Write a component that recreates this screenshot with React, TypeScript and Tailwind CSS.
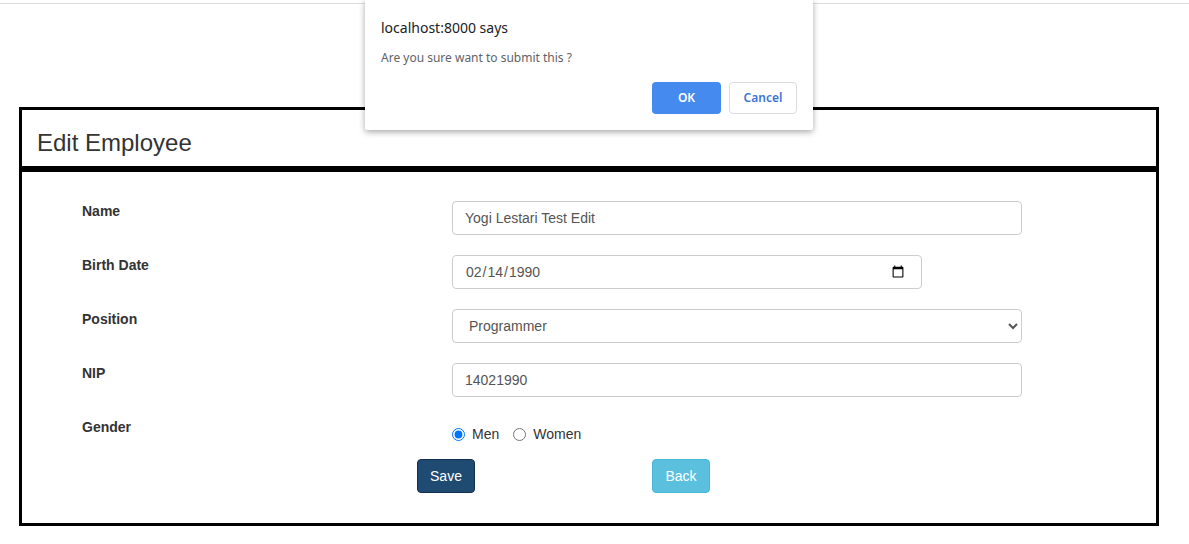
import { useState } from 'react';

const rowLabel = 'w-[370px] shrink-0 text-[14px] leading-5 font-bold text-[#333]';
const inputBase =
  'h-[34px] rounded-[4px] border border-[#ccc] bg-white px-3 text-[14px] text-[#555] outline-none';

function ConfirmDialog() {
  return (
    <div
      className="absolute left-[365px] top-0 w-[448px] h-[130px] bg-white rounded-b-[2px] shadow-[0_2px_6px_rgba(0,0,0,0.35)] px-4 pt-[18px]"
      style={{ fontFamily: '"Noto Sans", "Open Sans", sans-serif' }}
    >
      <div className="text-[14px] leading-5 text-[#202124]">localhost:8000 says</div>
      <div className="mt-[12px] text-[12px] leading-4 text-[#5f6368]">Are you sure want to submit this ?</div>
      <div className="mt-[16px] flex justify-end gap-2">
        <button className="w-[69px] h-[32px] rounded-[4px] bg-[#448aef] text-white text-[12px] font-semibold">
          OK
        </button>
        <button className="w-[68px] h-[32px] rounded-[4px] border border-[#dadce0] bg-white text-[#3b74d9] text-[12px] font-semibold">
          Cancel
        </button>
      </div>
    </div>
  );
}

export default function App() {
  const [name, setName] = useState('Yogi Lestari Test Edit');
  const [birth, setBirth] = useState('1990-02-14');
  const [position, setPosition] = useState('Programmer');
  const [nip, setNip] = useState('14021990');
  const [gender, setGender] = useState('men');

  return (
    <div
      className="relative w-[1189px] h-[544px] bg-white overflow-hidden"
      style={{ fontFamily: '"Liberation Sans", Arial, sans-serif' }}
    >
      <div className="h-[3px]" />
      <div className="border-t border-[#dcdcdc]" />

      <div className="ml-[19px] mt-[103px] w-[1140px] border-[3px] border-black">
        <div className="h-[62px] pl-[15px] pt-[19px] border-b-[6px] border-black">
          <h2 className="text-[24px] leading-7 text-[#333]">Edit Employee</h2>
        </div>

        <div className="pl-[60px] pt-[29px] pb-[30px]">
          <div className="flex items-start">
            <label className={rowLabel}>Name</label>
            <input
              className={`${inputBase} w-[570px] border-[#a8bfd6]`}
              value={name}
              onChange={(e) => setName(e.target.value)}
            />
          </div>

          <div className="flex items-start mt-[20px]">
            <label className={rowLabel}>Birth Date</label>
            <input
              type="date"
              className={`${inputBase} w-[470px] pr-[14px]`}
              value={birth}
              onChange={(e) => setBirth(e.target.value)}
            />
          </div>

          <div className="flex items-start mt-[20px]">
            <label className={rowLabel}>Position</label>
            <select
              className={`${inputBase} w-[570px] px-[12px]`}
              value={position}
              onChange={(e) => setPosition(e.target.value)}
            >
              <option>Programmer</option>
              <option>Designer</option>
              <option>Manager</option>
            </select>
          </div>

          <div className="flex items-start mt-[20px]">
            <label className={rowLabel}>NIP</label>
            <input
              className={`${inputBase} w-[570px]`}
              value={nip}
              onChange={(e) => setNip(e.target.value)}
            />
          </div>

          <div className="flex items-start mt-[20px]">
            <label className={rowLabel}>Gender</label>
            <div className="flex items-center pt-[7px] text-[14px] leading-5 text-[#333]">
              <input
                type="radio"
                name="gender"
                className="m-0 w-[13px] h-[13px] accent-[#0075ff]"
                checked={gender === 'men'}
                onChange={() => setGender('men')}
              />
              <span className="ml-[7px]">Men</span>
              <input
                type="radio"
                name="gender"
                className="m-0 ml-[14px] w-[13px] h-[13px]"
                checked={gender === 'women'}
                onChange={() => setGender('women')}
              />
              <span className="ml-[7px]">Women</span>
            </div>
          </div>

          <div className="flex mt-[15px] pl-[335px]">
            <button className="w-[58px] h-[34px] rounded-[4px] bg-[#1f4b73] border border-[#142f4a] text-white text-[14px]">
              Save
            </button>
            <button className="ml-[177px] w-[58px] h-[34px] rounded-[4px] bg-[#5bc0de] border border-[#46b8da] text-white text-[14px]">
              Back
            </button>
          </div>
        </div>
      </div>

      <ConfirmDialog />
    </div>
  );
}
